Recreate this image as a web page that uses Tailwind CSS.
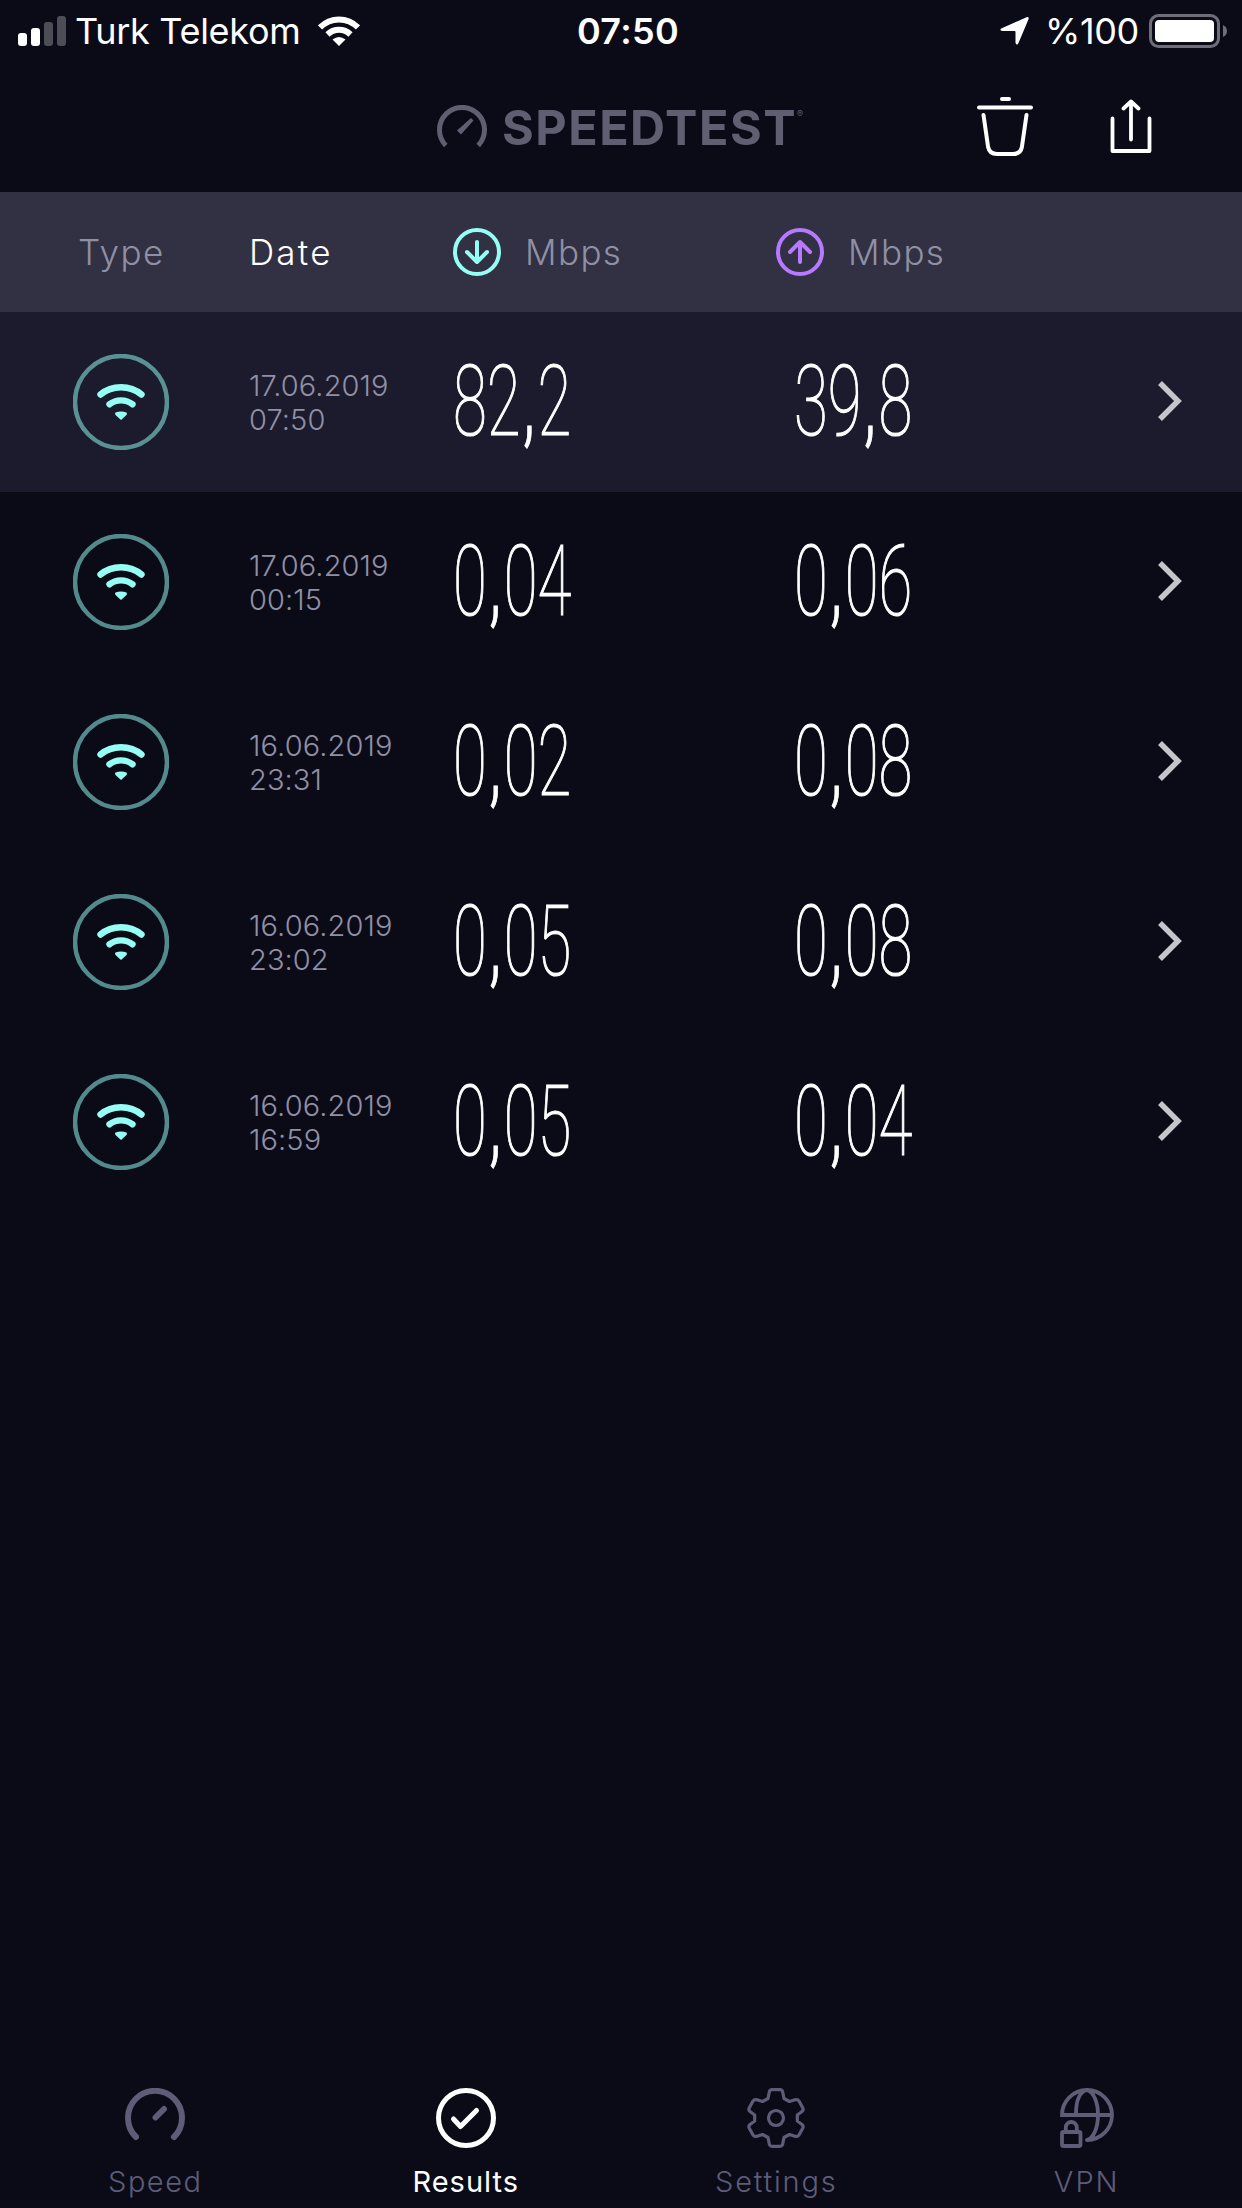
<!DOCTYPE html>
<html lang="en">
<head>
    <meta charset="UTF-8">
    <meta name="viewport" content="width=device-width, initial-scale=1.0">
    <title>Speedtest - Results</title>
    <script src="https://cdn.jsdelivr.net/npm/@tailwindcss/browser@4"></script>
</head>
<body class="bg-[#0b0b18] h-screen overflow-hidden font-['Inter',sans-serif] text-white">
    <div class="flex flex-col h-full">
        <!-- Status Bar -->
        <div class="h-[62px] shrink-0 grid grid-cols-[577px_1fr_auto] items-center pl-[18px] pr-[14px] text-[36px] leading-none">
            <div class="flex items-center">
                <svg class="w-12 h-[30px]" viewBox="0 0 48 30" fill="currentColor">
                    <rect x="0" y="17" width="9" height="13" rx="3" />
                    <rect x="13" y="12" width="9" height="18" rx="3" />
                    <rect x="26" y="6" width="9" height="24" rx="3" opacity=".27" />
                    <rect x="39" y="0" width="9" height="30" rx="3" opacity=".27" />
                </svg>
                <span class="ml-[9px] tracking-[-0.3px] w-[227px] whitespace-nowrap">Turk Telekom</span>
                <svg class="w-[42px] h-[30px] ml-4" viewBox="0 0 42 30" fill="none" stroke="currentColor" stroke-width="6">
                    <path d="M2 11.5C12.5 .7 29.500 .7 40 11.500" />
                    <path d="M9.500 18.500C16 12.300 26 12.300 32.500 18.500" />
                    <path d="M14.500 23.500Q21 18.500 27.500 23.500L21 30Z" fill="currentColor" stroke="none" />
                </svg>
            </div>
            <span class="font-semibold -ml-[18px] tracking-[0.3px]">07:50</span>
            <div class="flex items-center">
                <svg class="w-[29px] h-7" viewBox="0 0 29 28" fill="currentColor">
                    <path d="M26.500 .3Q29.300-.6 28.500 2.300L18.500 26Q17 29 15.500 26V15Q15.500 14 14.500 14H2.500Q-1 13.300 1.200 11.400Z" />
                </svg>
                <span class="ml-[16px] w-[97px] tracking-[-0.4px] whitespace-nowrap">%100</span>
                <svg class="w-[79px] h-[34px] ml-[7px]" viewBox="0 0 79 34" fill="none">
                    <rect x="1.500" y="1.500" width="68" height="31" rx="8" stroke="#6f6e78" stroke-width="3" />
                    <rect x="6" y="6" width="59" height="22" rx="4" fill="#fff" />
                    <path d="M74 11Q78 13 78 17T74 23Z" fill="#6f6e78" />
                </svg>
            </div>
        </div>

        <!-- Header -->
        <header class="h-[130px] shrink-0 flex items-center pl-[437px] text-[#5f5f71]">
            <svg class="w-[50px] h-[50px] mt-[6px]" viewBox="0 0 50 50" fill="none" stroke="currentColor" stroke-width="5">
                <path d="M8.800 40.500A22.500 22.500 0 1 1 41.200 40.500" />
                <path d="M34 13L20 25.500L24 29.500L36.500 15.500Z" fill="currentColor" stroke="none" />
            </svg>
            <h1 class="ml-[15px] mt-[2px] text-[48.500px] leading-none font-bold tracking-[1.500px] w-[295px] whitespace-nowrap">SPEEDTEST</h1>
            <span class="text-[9px] leading-none self-start mt-[47px] w-2">®</span>
            <button class="ml-[171px] -mt-[4px] text-white">
                <svg class="w-[58px] h-[62px]" viewBox="0 0 58 62" fill="none" stroke="currentColor" stroke-width="4" stroke-linecap="round">
                    <path d="M26 5h7M3 13.500h52M7.500 21l4.600 32Q13.500 60 21 60h16Q44.500 60 45.900 53L50.500 21" />
                </svg>
            </button>
            <button class="ml-[76px] -mt-[2px] text-white">
                <svg class="w-[42px] h-[54px]" viewBox="0 0 42 54" fill="none" stroke="currentColor" stroke-width="3.800" stroke-linecap="round" stroke-linejoin="round">
                    <path d="M2.500 19.500V52H39.500V19.500M21 40.500V2.500M13.500 9.500L21 2.500L28.500 9.500" />
                </svg>
            </button>
        </header>

        <!-- Column Titles -->
        <div class="h-[120px] shrink-0 bg-[#313143] grid grid-cols-[249px_204px_323px_1fr] items-center text-[35px] leading-none font-light text-[#9090a5]">
            <span class="pl-[78px] tracking-[1.5px]">Type</span>
            <span class="text-white tracking-[2.2px]">Date</span>
            <div class="flex items-center">
                <svg class="w-12 h-12 text-[#95fff5]" viewBox="0 0 48 48" fill="none" stroke="currentColor" stroke-width="4" stroke-linecap="round" stroke-linejoin="round">
                    <circle cx="24" cy="24" r="22" />
                    <path d="M24 14V34M14 24L24 34L34 24" />
                </svg>
                <span class="ml-6 tracking-[1.4px]">Mbps</span>
            </div>
            <div class="flex items-center">
                <svg class="w-12 h-12 text-[#b779ff]" viewBox="0 0 48 48" fill="none" stroke="currentColor" stroke-width="4" stroke-linecap="round" stroke-linejoin="round">
                    <circle cx="24" cy="24" r="22" />
                    <path d="M24 34V14M14 24L24 14L34 24" />
                </svg>
                <span class="ml-6 tracking-[1.4px]">Mbps</span>
            </div>
        </div>

        <!-- Results -->
        <main id="results" class="flex-1"></main>

        <!-- Tab Bar -->
        <nav class="h-[136px] shrink-0 grid grid-cols-4 pt-4 text-[29px] leading-none font-light text-[#5d5d78]">
            <a class="flex flex-col items-center gap-[19px]">
                <svg class="w-[60px] h-[60px]" viewBox="0 0 60 60" fill="none" stroke="currentColor" stroke-width="6" stroke-linecap="round">
                    <path d="M11 49A27 27 0 1 1 49 49M30.500 29.500L39 21" />
                </svg>
                <span class="tracking-[1.5px]">Speed</span>
            </a>
            <a class="flex flex-col items-center gap-[19px] text-white font-normal">
                <svg class="w-[60px] h-[60px]" viewBox="0 0 60 60" fill="none" stroke="currentColor" stroke-width="5" stroke-linecap="round" stroke-linejoin="round">
                    <circle cx="30" cy="30" r="27.500" />
                    <path d="M17.500 31L24.500 38.500L40.500 22.500" />
                </svg>
                <span class="tracking-[1px]">Results</span>
            </a>
            <a class="flex flex-col items-center gap-[19px]">
                <svg class="w-[60px] h-[60px]" viewBox="-30 -30 60 60" fill="none" stroke="currentColor" stroke-width="3.200" stroke-linejoin="round">
                    <circle r="7.500" />
                    <path d="M-4-28.300H4Q6.200-28.300 6.700-26L8-19.500L13.500-16.500L19-18.300Q21.800-19 23-17L26.700-10.300Q27.800-8 26-6.500L21.300-3V3L26 6.500Q27.800 8 26.700 10.300L23 17Q21.800 19 19 18.300L13.500 16.500L8 19.500L6.700 26Q6.200 28.300 4 28.300H-4Q-6.200 28.300-6.700 26L-8 19.500L-13.500 16.500L-19 18.300Q-21.800 19-23 17L-26.700 10.300Q-27.800 8-26 6.500L-21.300 3V-3L-26-6.500Q-27.800-8-26.700-10.300L-23-17Q-21.800-19-19-18.300L-13.500-16.500L-8-19.500L-6.700-26Q-6.200-28.300-4-28.300Z" />
                </svg>
                <span class="tracking-[1.8px]">Settings</span>
            </a>
            <a class="flex flex-col items-center gap-[19px]">
                <svg class="w-[54px] h-[60px]" viewBox="0 0 54 60" fill="none" stroke="currentColor" stroke-width="3.800" stroke-linecap="round">
                    <path d="M27 52A25 25 0 1 0 2 27H52M27 2C19 4 16 14 16 26M27 2C34 4 38 15 38 27S34 50 27 52" />
                    <rect x="2" y="44" width="18.500" height="14" rx="1.500" />
                    <path d="M5.800 43V39.500a5.500 5.500 0 0 1 11 0V43" />
                </svg>
                <span class="tracking-[2px]">VPN</span>
            </a>
        </nav>
    </div>

    <script>
        const results = [
            { date: '17.06.2019', time: '07:50', down: '82,2', up: '39,8' },
            { date: '17.06.2019', time: '00:15', down: '0,04', up: '0,06' },
            { date: '16.06.2019', time: '23:31', down: '0,02', up: '0,08' },
            { date: '16.06.2019', time: '23:02', down: '0,05', up: '0,08' },
            { date: '16.06.2019', time: '16:59', down: '0,05', up: '0,04' }
        ];

        // the comma gets a little extra room on both sides
        function formatSpeed(value) {
            return value.replace(',', '<span class="mx-[4px] font-light">,</span>');
        }

        const list = document.getElementById('results');
        results.forEach((r, i) => {
            const row = document.createElement('div');
            row.className = 'h-[180px] grid grid-cols-[249px_204px_341px_364px_1fr] items-center ' + (i === 0 ? 'bg-[#1b1b2d]' : '');
            row.innerHTML = `
                <svg class="w-24 h-24 ml-[73px]" viewBox="-48 -48 96 96" fill="none" stroke="#95fff5" stroke-linecap="round">
                    <circle r="46" stroke-opacity=".52" stroke-width="4.500" />
                    <path d="M-20.500-7.500C-9-17.200 9-17.200 20.500-7.500M-11.500 2.300C-5-3 5-3 11.500 2.300" stroke-width="6.400" />
                    <path d="M-5.500 10.500Q0 8.500 5.500 10.500Q6.500 11.500 5.500 13L0 18L-5.500 13Q-6.500 11.500-5.500 10.500Z" fill="#95fff5" stroke="none" />
                </svg>
                <p class="text-[29px] leading-[34px] font-light tracking-[0.1px] mt-[2px] text-[#9090a5]">${r.date}<br>${r.time}</p>
                <span class="font-['Roboto'] font-thin [-webkit-text-stroke:1.2px_white] text-[98px] leading-none -mt-[1px] origin-left scale-x-[0.63] whitespace-nowrap">${formatSpeed(r.down)}</span>
                <span class="font-['Roboto'] font-thin [-webkit-text-stroke:1.2px_white] text-[98px] leading-none -mt-[1px] origin-left scale-x-[0.63] whitespace-nowrap">${formatSpeed(r.up)}</span>
                <svg class="w-6 h-10 -mt-[3px]" viewBox="0 0 24 40" fill="none" stroke="#c6c5cb" stroke-width="5.500">
                    <path d="M2 2L20 20L2 38" />
                </svg>
            `;
            list.appendChild(row);
        });
    </script>
</body>
</html>
